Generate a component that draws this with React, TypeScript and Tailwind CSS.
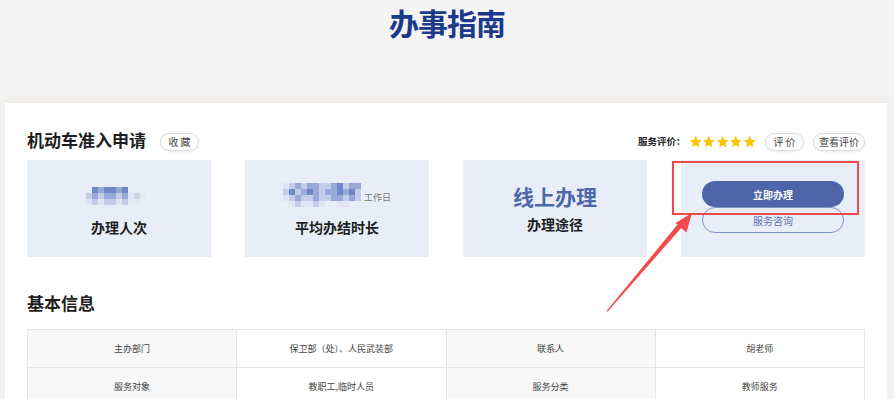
import React from "react";

const F = { fontFamily: '"Noto Sans CJK SC", "Microsoft YaHei", sans-serif' };

function Mosaic({ cells, size }: { cells: string[][]; size: number }) {
  return (
    <div className="flex flex-col">
      {cells.map((row, i) => (
        <div key={i} className="flex">
          {row.map((c, j) => (
            <div key={j} style={{ width: size, height: size, background: c }} />
          ))}
        </div>
      ))}
    </div>
  );
}

const a = "#7086c6";
const b = "#9aaad8";
const c = "#c3cde9";
const d = "#dfe5f2";
const e = "#e6e9ef";
const g = "#cfd3da";
const t = "transparent";

const mosaic1 = [
  [t, a, b, a, a, b, a, t, t, t],
  [c, b, c, b, b, c, b, d, g, e],
  [d, c, d, c, c, d, c, e, e, t],
];

const mosaic2 = [
  [d, c, b, c, b, b, c, c, b, a, c, b, b],
  [c, a, c, b, a, b, c, b, b, a, b, a, c],
  [d, c, b, c, c, b, c, c, b, b, c, b, c],
  [t, d, c, d, d, c, d, t, t, d, d, t, t],
];

function Star() {
  return (
    <svg width="13.5" height="13.5" viewBox="0 0 24 24">
      <path
        d="M12 1.5l3.1 6.9 7.4.8-5.6 5 1.6 7.4L12 17.8l-6.5 3.8 1.6-7.4-5.6-5 7.4-.8z"
        fill="#f7c600"
      />
    </svg>
  );
}

function Pill({ children, w }: { children: React.ReactNode; w: string }) {
  return (
    <div
      className={`${w} h-[18px] rounded-full border border-[#dcdcdc] bg-white flex items-center justify-center text-[10px] text-[#444] shadow-[0_1px_2px_rgba(0,0,0,0.08)]`}
    >
      {children}
    </div>
  );
}

export default function App() {
  const rows = [
    ["主办部门", "保卫部（处）、人民武装部", "联系人", "胡老师"],
    ["服务对象", "教职工,临时人员", "服务分类", "教师服务"],
  ];
  return (
    <div className="relative w-[894px] h-[399px] overflow-hidden bg-[#f4f4f4]" style={F}>
      <div className="h-[103px] flex justify-center pt-[7px]">
        <div className="text-[30px] leading-[30px] font-bold text-[#1b3a8c] tracking-[-1px]">办事指南</div>
      </div>
      <div className="ml-[5px] w-[882px] h-[300px] bg-white px-[22px] shadow-[0_-4px_7px_rgba(225,212,198,0.3)]">
        <div className="pt-[26px] h-[48px] flex items-center">
          <div className="text-[17px] leading-[22px] font-bold text-[#1e1e1e]">机动车准入申请</div>
          <div className="ml-[14px] mt-[3px]">
            <Pill w="w-[39px]">收 藏</Pill>
          </div>
          <div className="ml-auto flex items-center mt-[3px]">
            <div className="text-[9.5px] font-bold text-[#222] mr-[3px]">服务评价：</div>
            <div className="flex">
              <Star />
              <Star />
              <Star />
              <Star />
              <Star />
            </div>
            <div className="ml-[9px]">
              <Pill w="w-[39px]">评 价</Pill>
            </div>
            <div className="ml-[9px]">
              <Pill w="w-[52px]">查看评价</Pill>
            </div>
          </div>
        </div>
        <div className="mt-[9px] grid grid-cols-4 gap-[34px] h-[97px]">
          <div className="bg-[#e8eef7] flex flex-col items-center pt-[27px]">
            <div className="ml-[-6px]">
              <Mosaic cells={mosaic1} size={6} />
            </div>
            <div className="mt-[13px] text-[14px] leading-[18px] font-bold text-[#1e1e1e]">办理人次</div>
          </div>
          <div className="bg-[#e8eef7] flex flex-col items-center pt-[23px]">
            <div className="flex items-end">
              <Mosaic cells={mosaic2} size={6} />
              <span className="ml-[3px] mb-[3px] text-[9px] leading-[12px] text-[#777]">工作日</span>
            </div>
            <div className="mt-[11px] text-[14px] leading-[18px] font-bold text-[#1e1e1e]">平均办结时长</div>
          </div>
          <div className="bg-[#e8eef7] flex flex-col items-center pt-[24px]">
            <div className="text-[21px] leading-[24px] font-bold text-[#4f67ab]">线上办理</div>
            <div className="mt-[7px] text-[14px] leading-[18px] font-bold text-[#1e1e1e]">办理途径</div>
          </div>
          <div className="bg-[#e8eef7] flex flex-col items-center pt-[21px]">
            <div className="w-[142px] h-[26px] rounded-full bg-[#4e66a9] flex items-center justify-center text-[10px] font-bold text-white">
              立即办理
            </div>
            <div className="w-[142px] h-[26px] rounded-full border border-[#7f92c6] flex items-center justify-center text-[10px] text-[#5d71ae]">
              服务咨询
            </div>
          </div>
        </div>
        <div className="mt-[34px] text-[17px] leading-[24px] font-bold text-[#1e1e1e]">基本信息</div>
        <div className="mt-[14px] border-t border-l border-[#e6e6e6]">
          {rows.map((r, i) => (
            <div key={i} className="grid grid-cols-4 h-[38px]">
              {r.map((cell, j) => (
                <div
                  key={j}
                  className={`flex items-center justify-center border-r border-b border-[#e6e6e6] text-[9px] text-[#444] ${
                    j % 2 === 0 ? "bg-[#f8f8f8]" : "bg-white"
                  }`}
                >
                  {cell}
                </div>
              ))}
            </div>
          ))}
        </div>
      </div>

      <div className="absolute left-[672px] top-[161px] w-[187px] h-[54px] border-2 border-[#f04a4a] pointer-events-none" />
      <svg className="absolute left-0 top-0 pointer-events-none" width="894" height="399">
        <polygon points="606.5,311 607.5,311.8 683,226 679,222.8" fill="#f24b4b" />
        <polygon points="692,213 686.5,232.5 675.5,223" fill="#f24b4b" />
      </svg>
    </div>
  );
}
